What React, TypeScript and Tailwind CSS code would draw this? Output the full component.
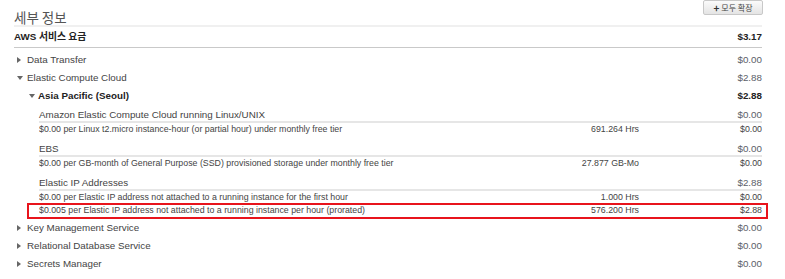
import React from 'react';

type Detail = { desc: string; qty: string; cost: string; flagged?: boolean };
type LineItem = { title: string; total: string; details: Detail[] };

const lineItems: LineItem[] = [
  {
    title: 'Amazon Elastic Compute Cloud running Linux/UNIX',
    total: '$0.00',
    details: [
      { desc: '$0.00 per Linux t2.micro instance-hour (or partial hour) under monthly free tier', qty: '691.264 Hrs', cost: '$0.00' },
    ],
  },
  {
    title: 'EBS',
    total: '$0.00',
    details: [
      { desc: '$0.00 per GB-month of General Purpose (SSD) provisioned storage under monthly free tier', qty: '27.877 GB-Mo', cost: '$0.00' },
    ],
  },
  {
    title: 'Elastic IP Addresses',
    total: '$2.88',
    details: [
      { desc: '$0.00 per Elastic IP address not attached to a running instance for the first hour', qty: '1.000 Hrs', cost: '$0.00' },
      { desc: '$0.005 per Elastic IP address not attached to a running instance per hour (prorated)', qty: '576.200 Hrs', cost: '$2.88', flagged: true },
    ],
  },
];

function Caret({ open }: { open: boolean }) {
  return open ? (
    <span className="inline-block w-0 h-0 border-x-[3px] border-x-transparent border-t-[4px] border-t-[#666]" />
  ) : (
    <span className="inline-block w-0 h-0 border-y-[3px] border-y-transparent border-l-[4px] border-l-[#666]" />
  );
}

function ServiceRow({ name, cost, open = false }: { name: string; cost: string; open?: boolean }) {
  return (
    <div className="flex h-[18px] items-center text-[9.8px]">
      <span className="w-[13px] flex items-center pl-[3px]">
        <Caret open={open} />
      </span>
      <span className="flex-1 text-[#444]">{name}</span>
      <span className="text-[#5b6068]">{cost}</span>
    </div>
  );
}

function DetailRow({ d }: { d: Detail }) {
  const inner = (
    <>
      <span className="flex-1 truncate">{d.desc}</span>
      <span className="w-[110px] text-right">{d.qty}</span>
      <span className="w-[123px] text-right">{d.cost}</span>
    </>
  );
  if (d.flagged) {
    return (
      <div className="flex h-[16px] items-center -ml-[12px] -mr-[6px] pl-[10px] pr-[4px] border-2 border-[#e8141c] text-[8.8px] text-[#444]">
        {inner}
      </div>
    );
  }
  return <div className="flex h-[11px] items-center text-[8.8px] text-[#444]">{inner}</div>;
}

export default function App() {
  return (
    <div
      className="w-[785px] h-[279px] overflow-hidden bg-white pl-[14px] pr-[23px]"
      style={{ fontFamily: '"Liberation Sans", Arial, "Noto Sans CJK KR", sans-serif' }}
    >
      <div className="flex h-[25px] justify-between items-start">
        <span className="pt-[8px] text-[13.5px] leading-[18px] text-[#555]" style={{ fontFamily: '"Noto Sans CJK KR", sans-serif' }}>
          세부 정보
        </span>
        <button
          type="button"
          className="mr-[-1px] h-[15px] w-[60px] flex items-center justify-center gap-[2px] rounded-[2px] border border-[#c8c8c8] bg-gradient-to-b from-[#fbfbfb] to-[#e4e4e4] text-[8px] text-[#444]"
          style={{ fontFamily: '"Noto Sans CJK KR", sans-serif' }}
        >
          <span className="font-bold text-[10px] leading-none text-[#333]">+</span>
          <span className="leading-none">모두 확장</span>
        </button>
      </div>
      <div className="h-[2px] bg-[#f0f0f0]" />
      <div className="flex h-[21px] items-end pb-[2px] border-b border-[#c9c9c9] text-[9.8px] font-bold text-[#222]">
        <span className="flex-1">
          AWS <span style={{ fontFamily: '"Noto Sans CJK KR", sans-serif' }} className="font-bold">서비스 요금</span>
        </span>
        <span>$3.17</span>
      </div>

      <div className="pt-[3px]">
        <ServiceRow name="Data Transfer" cost="$0.00" />
        <ServiceRow name="Elastic Compute Cloud" cost="$2.88" open />
        <div className="flex h-[18px] items-center text-[9.8px] font-bold text-[#222]">
          <span className="w-[16px] flex items-center pl-[15px] mr-[8px]">
            <Caret open />
          </span>
          <span className="flex-1">Asia Pacific (Seoul)</span>
          <span>$2.88</span>
        </div>

        <div className="pl-[25px]">
          {lineItems.map((li) => (
            <div key={li.title} className="mb-[4px] last:mb-0">
              <div className="flex h-[16px] items-end leading-[12px] text-[9.8px] text-[#444]">
                <span className="flex-1">{li.title}</span>
                <span className="text-[#5b6068]">{li.total}</span>
              </div>
              <div className="h-[2px] mb-[1px] bg-[#e6e6e6]" />
              {li.details.map((d) => (
                <DetailRow key={d.desc} d={d} />
              ))}
            </div>
          ))}
        </div>

        <ServiceRow name="Key Management Service" cost="$0.00" />
        <ServiceRow name="Relational Database Service" cost="$0.00" />
        <ServiceRow name="Secrets Manager" cost="$0.00" />
      </div>
    </div>
  );
}
